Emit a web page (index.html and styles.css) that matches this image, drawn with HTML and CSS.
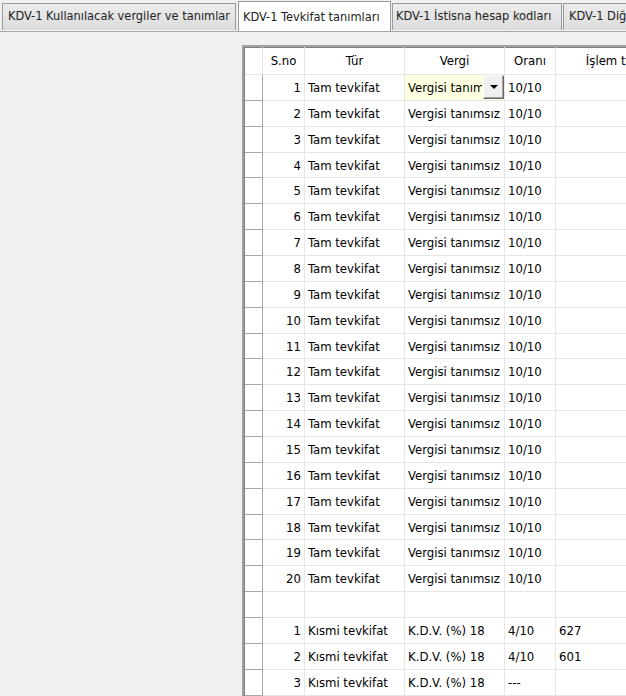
FILE: index.html
```html
<!DOCTYPE html>
<html>
<head>
<meta charset="utf-8">
<link rel="stylesheet" href="styles.css">
</head>
<body>
<div class="tabs">
  <div class="tab t1">KDV-1 Kullanılacak vergiler ve tanımlar</div>
  <div class="tab active t2">KDV-1 Tevkifat tanımları</div>
  <div class="tab t3">KDV-1 İstisna hesap kodları</div>
  <div class="tab t4">KDV-1 Diğer</div>
</div>
<div class="panel">
  <div class="grid">
    <div class="row head">
      <div class="c ind"></div>
      <div class="c sno">S.no</div>
      <div class="c tur">Tür</div>
      <div class="c vergi">Vergi</div>
      <div class="c oran">Oranı</div>
      <div class="c islem">İşlem türü</div>
    </div>
    <div class="row">
      <div class="c ind"></div>
      <div class="c sno">1</div>
      <div class="c tur">Tam tevkifat</div>
      <div class="c vergi edit"><span class="etext">Vergisi tanımsız</span><span class="btn"><span class="tri"></span></span></div>
      <div class="c oran">10/10</div>
      <div class="c islem"></div>
    </div>
    <div class="row"><div class="c ind"></div><div class="c sno">2</div><div class="c tur">Tam tevkifat</div><div class="c vergi">Vergisi tanımsız</div><div class="c oran">10/10</div><div class="c islem"></div></div>
    <div class="row"><div class="c ind"></div><div class="c sno">3</div><div class="c tur">Tam tevkifat</div><div class="c vergi">Vergisi tanımsız</div><div class="c oran">10/10</div><div class="c islem"></div></div>
    <div class="row"><div class="c ind"></div><div class="c sno">4</div><div class="c tur">Tam tevkifat</div><div class="c vergi">Vergisi tanımsız</div><div class="c oran">10/10</div><div class="c islem"></div></div>
    <div class="row"><div class="c ind"></div><div class="c sno">5</div><div class="c tur">Tam tevkifat</div><div class="c vergi">Vergisi tanımsız</div><div class="c oran">10/10</div><div class="c islem"></div></div>
    <div class="row"><div class="c ind"></div><div class="c sno">6</div><div class="c tur">Tam tevkifat</div><div class="c vergi">Vergisi tanımsız</div><div class="c oran">10/10</div><div class="c islem"></div></div>
    <div class="row"><div class="c ind"></div><div class="c sno">7</div><div class="c tur">Tam tevkifat</div><div class="c vergi">Vergisi tanımsız</div><div class="c oran">10/10</div><div class="c islem"></div></div>
    <div class="row"><div class="c ind"></div><div class="c sno">8</div><div class="c tur">Tam tevkifat</div><div class="c vergi">Vergisi tanımsız</div><div class="c oran">10/10</div><div class="c islem"></div></div>
    <div class="row"><div class="c ind"></div><div class="c sno">9</div><div class="c tur">Tam tevkifat</div><div class="c vergi">Vergisi tanımsız</div><div class="c oran">10/10</div><div class="c islem"></div></div>
    <div class="row"><div class="c ind"></div><div class="c sno">10</div><div class="c tur">Tam tevkifat</div><div class="c vergi">Vergisi tanımsız</div><div class="c oran">10/10</div><div class="c islem"></div></div>
    <div class="row"><div class="c ind"></div><div class="c sno">11</div><div class="c tur">Tam tevkifat</div><div class="c vergi">Vergisi tanımsız</div><div class="c oran">10/10</div><div class="c islem"></div></div>
    <div class="row"><div class="c ind"></div><div class="c sno">12</div><div class="c tur">Tam tevkifat</div><div class="c vergi">Vergisi tanımsız</div><div class="c oran">10/10</div><div class="c islem"></div></div>
    <div class="row"><div class="c ind"></div><div class="c sno">13</div><div class="c tur">Tam tevkifat</div><div class="c vergi">Vergisi tanımsız</div><div class="c oran">10/10</div><div class="c islem"></div></div>
    <div class="row"><div class="c ind"></div><div class="c sno">14</div><div class="c tur">Tam tevkifat</div><div class="c vergi">Vergisi tanımsız</div><div class="c oran">10/10</div><div class="c islem"></div></div>
    <div class="row"><div class="c ind"></div><div class="c sno">15</div><div class="c tur">Tam tevkifat</div><div class="c vergi">Vergisi tanımsız</div><div class="c oran">10/10</div><div class="c islem"></div></div>
    <div class="row"><div class="c ind"></div><div class="c sno">16</div><div class="c tur">Tam tevkifat</div><div class="c vergi">Vergisi tanımsız</div><div class="c oran">10/10</div><div class="c islem"></div></div>
    <div class="row"><div class="c ind"></div><div class="c sno">17</div><div class="c tur">Tam tevkifat</div><div class="c vergi">Vergisi tanımsız</div><div class="c oran">10/10</div><div class="c islem"></div></div>
    <div class="row"><div class="c ind"></div><div class="c sno">18</div><div class="c tur">Tam tevkifat</div><div class="c vergi">Vergisi tanımsız</div><div class="c oran">10/10</div><div class="c islem"></div></div>
    <div class="row"><div class="c ind"></div><div class="c sno">19</div><div class="c tur">Tam tevkifat</div><div class="c vergi">Vergisi tanımsız</div><div class="c oran">10/10</div><div class="c islem"></div></div>
    <div class="row"><div class="c ind"></div><div class="c sno">20</div><div class="c tur">Tam tevkifat</div><div class="c vergi">Vergisi tanımsız</div><div class="c oran">10/10</div><div class="c islem"></div></div>
    <div class="row"><div class="c ind"></div><div class="c sno"></div><div class="c tur"></div><div class="c vergi"></div><div class="c oran"></div><div class="c islem"></div></div>
    <div class="row"><div class="c ind"></div><div class="c sno">1</div><div class="c tur">Kısmi tevkifat</div><div class="c vergi">K.D.V. (%) 18</div><div class="c oran">4/10</div><div class="c islem">627</div></div>
    <div class="row"><div class="c ind"></div><div class="c sno">2</div><div class="c tur">Kısmi tevkifat</div><div class="c vergi">K.D.V. (%) 18</div><div class="c oran">4/10</div><div class="c islem">601</div></div>
    <div class="row"><div class="c ind"></div><div class="c sno">3</div><div class="c tur">Kısmi tevkifat</div><div class="c vergi">K.D.V. (%) 18</div><div class="c oran">---</div><div class="c islem"></div></div>
  </div>
</div>
</body>
</html>
```

FILE: styles.css
```css
html, body {
  margin: 0;
  padding: 0;
  background: #f0f0f0;
  overflow: hidden;
  width: 626px;
  height: 696px;
}
body {
  font-family: "DejaVu Sans Condensed", "DejaVu Sans", sans-serif;
  font-size: 13px;
  color: #000;
}
.tabs {
  display: flex;
  align-items: flex-end;
  height: 31px;
  padding-left: 2px;
  border-bottom: 1px solid #a8a8a8;
  box-sizing: content-box;
  white-space: nowrap;
  overflow: hidden;
  font-size: 12.7px;
}
.tab {
  box-sizing: border-box;
  height: 27px;
  line-height: 24px;
  padding-left: 5px;
  border: 1px solid #9a9a9a;
  border-bottom: none;
  background: linear-gradient(#ececec, #dcdcdc);
  color: #222;
  overflow: hidden;
  flex: none;
  margin-bottom: 1px;
}
.t1 { width: 234px; }
.t2 { width: 153px; margin-left: 2px; }
.t3 { width: 170px; margin-left: 1px; padding-left: 3px; }
.t4 { width: 80px; margin-left: 1px; }
.tab.active {
  background: #fff;
  height: 31px;
  line-height: 30px;
  padding-left: 4px;
  margin-bottom: -1px;
  position: relative;
}
.panel {
  padding-left: 242px;
  padding-top: 13px;
}
.grid {
  border-left: 2px solid #a0a0a0;
  border-top: 2px solid #a0a0a0;
  box-shadow: inset 1px 1px 0 #808080;
  background: #fff;
  height: 700px;
}
.row {
  display: flex;
  height: 25.87px;
}
.row.head {
  height: 28px;
}
.c {
  box-sizing: border-box;
  border-right: 1px solid #e6e6e6;
  border-bottom: 1px solid #e6e6e6;
  padding: 0 3px;
  display: flex;
  align-items: center;
  white-space: nowrap;
  overflow: hidden;
  flex: none;
}
.ind {
  width: 18px;
  border-right: 1px solid #a8a8a8;
  border-bottom: 1px solid #a8a8a8;
  margin-left: 1px;
}
.head .ind {
  border-right: 1px solid #e6e6e6;
  border-bottom: 1px solid #e6e6e6;
}
.sno { width: 42px; justify-content: flex-end; }
.tur { width: 100px; }
.vergi { width: 100px; }
.oran { width: 51px; }
.islem { width: 120px; }
.head .c { justify-content: center; }
.edit {
  background: #ffffe1;
  padding-right: 0;
  position: relative;
}
.etext {
  width: 74px;
  overflow: hidden;
  flex: none;
}
.btn {
  position: absolute;
  right: 0;
  top: 0;
  width: 21px;
  height: 24px;
  box-sizing: border-box;
  background: #f0f0f0;
  border-top: 1px solid #fff;
  border-left: 1px solid #fff;
  border-right: 1px solid #696969;
  border-bottom: 1px solid #696969;
  box-shadow: inset -1px -1px 0 #a0a0a0;
  display: flex;
  align-items: center;
  justify-content: center;
}
.tri {
  width: 0;
  height: 0;
  border-left: 4px solid transparent;
  border-right: 4px solid transparent;
  border-top: 4px solid #000;
}
```
